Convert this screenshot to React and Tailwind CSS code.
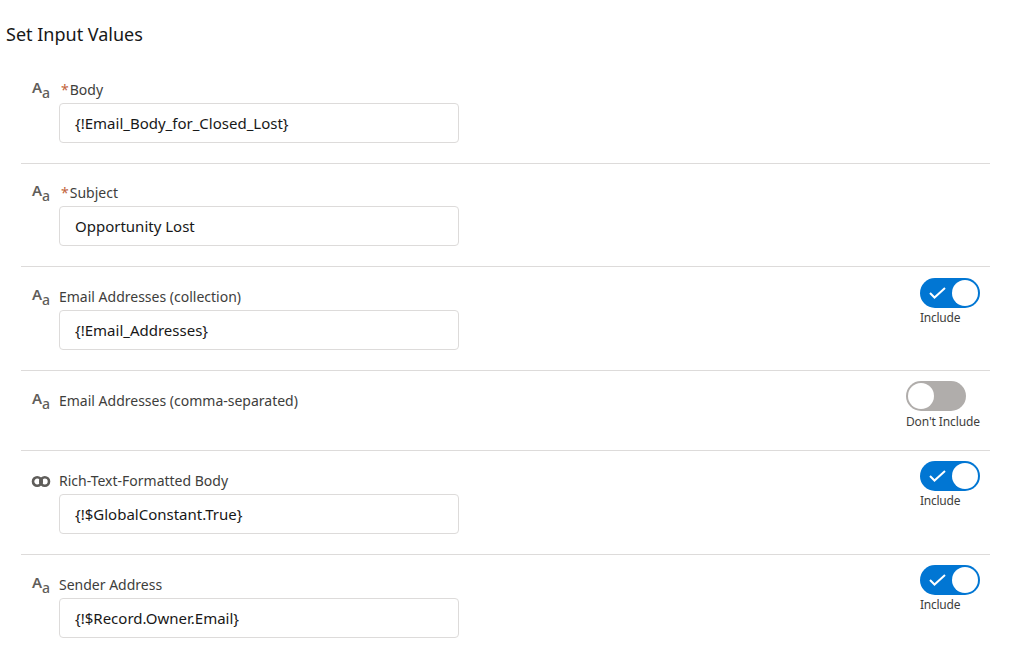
const AaIcon = () => (
    <svg width="18" height="17" viewBox="0 0 18 17" className="shrink-0 overflow-visible" fill="#5f5d5a" fontFamily="'Noto Sans', sans-serif">
        <text x="0" y="11" fontSize="15" fontWeight="600">A</text>
        <text x="10" y="16" fontSize="14" fontWeight="500">a</text>
    </svg>
);

const LinkIcon = () => (
    <svg width="20" height="11" viewBox="0 0 20 11" className="shrink-0 -ml-px" fill="none" stroke="#5f5d5a" strokeWidth="2.6">
        <circle cx="6.2" cy="5.5" r="4.2" />
        <circle cx="13.8" cy="5.5" r="4.2" />
        <ellipse cx="10" cy="5.5" rx="2" ry="3.4" fill="#5f5d5a" stroke="none" />
    </svg>
);

const Toggle = ({ on, tight }) => (
    <div className={`flex flex-col items-start ${tight ? "-mt-px" : ""}`}>
        {on ? (
            <div className="w-[60px] h-[30px] rounded-full bg-[#0176d3] flex items-center justify-between pl-[9px] pr-[2px]">
                <svg width="17" height="12" viewBox="0 0 17 12" fill="none" stroke="#fff" strokeWidth="2">
                    <path d="M1 6l4.5 4.5L16 1" />
                </svg>
                <div className="w-[26px] h-[26px] rounded-full bg-white"></div>
            </div>
        ) : (
            <div className="w-[60px] h-[30px] rounded-full bg-[#b0adab] flex items-center pl-[2px]">
                <div className="w-[26px] h-[26px] rounded-full bg-white"></div>
            </div>
        )}
        <div className={`text-[12px] leading-[18px] text-[#3e3e3c] whitespace-nowrap ${on ? "mt-px tracking-[-0.25px]" : "mt-[2px] tracking-[-0.1px]"}`}>{on ? "Include" : "Don't Include"}</div>
    </div>
);

const rows = [
    { label: "Body", required: true, value: "{!Email_Body_for_Closed_Lost}" },
    { label: "Subject", required: true, value: "Opportunity Lost" },
    { label: "Email Addresses (collection)", value: "{!Email_Addresses}", toggle: true },
    { label: "Email Addresses (comma-separated)", toggle: false, tight: true },
    { label: "Rich-Text-Formatted Body", value: "{!$GlobalConstant.True}", toggle: true, tight: true, icon: "link" },
    { label: "Sender Address", value: "{!$Record.Owner.Email}", toggle: true, tight: true },
];

const InputRow = ({ row, last }) => (
    <div className={`flex pl-[11px] pr-[10px] pt-[11px] ${last ? "" : "border-b border-[#dddbda]"} ${row.value ? "pb-[20px]" : "pb-[19px]"}`}>
        <div className={`w-[27px] ${row.required ? "pt-[10px]" : "pt-[11px]"}`}>
            {row.icon === "link" ? <div className="pt-[3px]"><LinkIcon /></div> : <AaIcon />}
        </div>
        <div className={`flex-1 ${row.required ? "pt-[8px]" : "pt-[9px]"}`}>
            <div className="text-[14px] leading-[20px] text-[#3e3e3c] flex">
                {row.required && <span className="text-[#c2643a] ml-[2px] mr-px">*</span>}
                {row.label}
            </div>
            {row.value && (
                <div className="mt-[3px] w-[400px] h-[40px] border border-[#dddbda] rounded-[4px] bg-white flex items-center pl-[15px] text-[15px] text-[#181818]">
                    {row.value}
                </div>
            )}
        </div>
        {row.toggle !== undefined && <Toggle on={row.toggle} tight={row.tight} />}
    </div>
);

export default function App() {
    return (
        <div className="w-[1012px] h-[645px] overflow-hidden bg-white font-['Noto_Sans',sans-serif]">
            <h1 className="pl-[6px] pt-[22px] text-[18px] leading-[24px] text-[#181818]">Set Input Values</h1>
            <div className="ml-[21px] w-[969px] mt-[15px]">
                {rows.map((row, i) => (
                    <InputRow key={row.label} row={row} last={i === rows.length - 1} />
                ))}
            </div>
        </div>
    );
}
